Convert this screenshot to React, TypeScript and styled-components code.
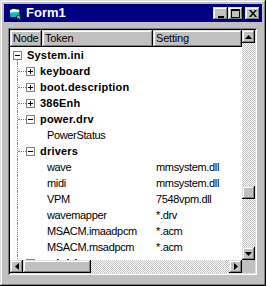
import React from 'react';
import styled, { createGlobalStyle, css } from 'styled-components';

const GlobalStyle = createGlobalStyle`
  html, body {
    margin: 0;
    padding: 0;
    background: #c0c0c0;
  }
  * {
    box-sizing: border-box;
  }
`;

const raised = css`
  box-shadow: inset -1px -1px #000, inset 1px 1px #dfdfdf,
    inset -2px -2px #808080, inset 2px 2px #fff;
`;

const Window = styled.div`
  width: 266px;
  height: 286px;
  padding: 4px;
  display: flex;
  flex-direction: column;
  background: #c0c0c0;
  ${raised}
  font-family: 'Liberation Sans', Arial, sans-serif;
`;

const TitleBar = styled.div`
  height: 18px;
  flex: none;
  background: #000080;
  display: flex;
  align-items: center;
  padding: 0 2px 0 4px;
`;

const TitleText = styled.span`
  flex: 1;
  margin-left: 4px;
  color: #fff;
  font-weight: bold;
  font-size: 13px;
  line-height: 18px;
`;

const CaptionButton = styled.div<{ $gap?: boolean }>`
  width: 15px;
  height: 13px;
  margin-left: ${p => (p.$gap ? '2px' : '0')};
  background: #c0c0c0;
  ${raised}
  display: flex;
  align-items: center;
  justify-content: center;
`;

const Client = styled.div`
  flex: 1;
  min-height: 0;
  padding: 6px 5px 7px 4px;
  display: flex;
`;

const TreeFrame = styled.div`
  flex: 1;
  padding: 2px;
  background: #fff;
  box-shadow: inset 1px 1px #808080, inset -1px -1px #fff,
    inset 2px 2px #000, inset -2px -2px #dfdfdf;
  display: grid;
  grid-template-columns: minmax(0, 1fr) 13px;
  grid-template-rows: minmax(0, 1fr) 13px;
  min-height: 0;
`;

const ListArea = styled.div`
  overflow: hidden;
  min-height: 0;
  display: flex;
  flex-direction: column;
`;

const Header = styled.div`
  display: grid;
  grid-template-columns: 32px 111px 89px;
  height: 17px;
  flex: none;
`;

const HeaderCell = styled.div`
  background: #c0c0c0;
  ${raised}
  font-size: 11px;
  letter-spacing: -0.2px;
  line-height: 16px;
  padding-left: 3px;
  color: #000;
  white-space: nowrap;
  overflow: hidden;
`;

const Row = styled.div`
  height: 16px;
  flex: none;
  display: grid;
  grid-template-columns: 146px 1fr;
  align-items: stretch;
`;

const NodePart = styled.div`
  display: flex;
  align-items: stretch;
`;

const Cell = styled.div<{ $down?: boolean; $up?: boolean; $tee?: boolean }>`
  width: 13px;
  flex: none;
  position: relative;
  ${p =>
    (p.$up || p.$down) &&
    css`
      &::before {
        content: '';
        position: absolute;
        left: 7px;
        top: ${p.$up ? '0' : '9px'};
        bottom: 0;
        border-left: 1px dotted #808080;
      }
    `}
  ${p =>
    p.$tee &&
    css`
      &::after {
        content: '';
        position: absolute;
        left: 8px;
        right: -3px;
        top: 8px;
        border-top: 1px dotted #808080;
      }
    `}
`;

const Knob = styled.div`
  position: absolute;
  left: 3px;
  top: 4px;
  width: 9px;
  height: 9px;
  border: 1px solid #808080;
  background: #fff;
  z-index: 1;
  &::before {
    content: '';
    position: absolute;
    left: 1px;
    top: 3px;
    width: 5px;
    height: 1px;
    background: #000;
  }
`;

const PlusKnob = styled(Knob)`
  &::after {
    content: '';
    position: absolute;
    left: 3px;
    top: 1px;
    width: 1px;
    height: 5px;
    background: #000;
  }
`;

const Label = styled.span<{ $bold?: boolean; $indent: number }>`
  margin-left: ${p => p.$indent}px;
  font-size: 11px;
  line-height: 16px;
  font-weight: ${p => (p.$bold ? 'bold' : 'normal')};
  letter-spacing: ${p => (p.$bold ? '0.2px' : '-0.35px')};
  color: #000;
  white-space: nowrap;
`;

const Value = styled.span`
  font-size: 11px;
  line-height: 16px;
  letter-spacing: -0.35px;
  color: #000;
  white-space: nowrap;
`;

const VScroll = styled.div`
  display: flex;
  flex-direction: column;
  min-height: 0;
`;

const HScroll = styled.div`
  display: flex;
`;

const Track = styled.div<{ $vertical?: boolean }>`
  flex: 1;
  min-height: 0;
  display: flex;
  flex-direction: ${p => (p.$vertical ? 'column' : 'row')};
  background: repeating-conic-gradient(#c0c0c0 0 25%, #fff 0 50%) 0 0 / 2px 2px;
`;

const ScrollButton = styled.div`
  width: 13px;
  height: 13px;
  flex: none;
  background: #c0c0c0;
  ${raised}
  display: flex;
  align-items: center;
  justify-content: center;
`;

const Thumb = styled.div<{ $offset: number; $size: number; $vertical?: boolean }>`
  flex: none;
  background: #c0c0c0;
  ${raised}
  ${p =>
    p.$vertical
      ? css`
          margin-top: ${p.$offset}px;
          height: ${p.$size}px;
        `
      : css`
          margin-left: ${p.$offset}px;
          width: ${p.$size}px;
        `}
`;

const Corner = styled.div`
  background: #c0c0c0;
`;

type Node = {
  level: number;
  text: string;
  value?: string;
  state?: 'open' | 'closed';
};

const nodes: Node[] = [
  { level: 0, text: 'System.ini', state: 'open' },
  { level: 1, text: 'keyboard', state: 'closed' },
  { level: 1, text: 'boot.description', state: 'closed' },
  { level: 1, text: '386Enh', state: 'closed' },
  { level: 1, text: 'power.drv', state: 'open' },
  { level: 2, text: 'PowerStatus' },
  { level: 1, text: 'drivers', state: 'open' },
  { level: 2, text: 'wave', value: 'mmsystem.dll' },
  { level: 2, text: 'midi', value: 'mmsystem.dll' },
  { level: 2, text: 'VPM', value: '7548vpm.dll' },
  { level: 2, text: 'wavemapper', value: '*.drv' },
  { level: 2, text: 'MSACM.imaadpcm', value: '*.acm' },
  { level: 2, text: 'MSACM.msadpcm', value: '*.acm' },
  { level: 1, text: 'mci.drivers', state: 'closed' },
];

function Expander(props: { state?: 'open' | 'closed' }) {
  if (!props.state) return null;
  return props.state === 'open' ? <Knob /> : <PlusKnob />;
}

function TreeRow({ node }: { node: Node }) {
  let gutter: React.ReactNode;
  let indent = 4;
  if (node.level === 0) {
    gutter = (
      <Cell $down>
        <Expander state={node.state} />
      </Cell>
    );
  } else if (node.level === 1) {
    gutter = (
      <>
        <Cell $up $tee />
        <Cell>
          <Expander state={node.state} />
        </Cell>
      </>
    );
  } else {
    gutter = (
      <>
        <Cell $up />
        <Cell />
      </>
    );
    indent = 11;
  }
  return (
    <Row>
      <NodePart>
        {gutter}
        <Label $bold={node.level < 2} $indent={indent}>
          {node.text}
        </Label>
      </NodePart>
      <Value>{node.value}</Value>
    </Row>
  );
}

const Arrow = ({ dir }: { dir: 'up' | 'down' | 'left' | 'right' }) => {
  const pts = {
    up: '3.5,0 7,4 0,4',
    down: '0,0 7,0 3.5,4',
    left: '4,0 4,7 0,3.5',
    right: '0,0 0,7 4,3.5',
  }[dir];
  const vertical = dir === 'up' || dir === 'down';
  return (
    <svg width={vertical ? 7 : 4} height={vertical ? 4 : 7} viewBox={vertical ? '0 0 7 4' : '0 0 4 7'}>
      <polygon points={pts} fill="#000" />
    </svg>
  );
};

function FormIcon() {
  return (
    <svg width="14" height="13" viewBox="0 0 14 13">
      <path d="M1 3 L5 1 L12 2 L12 10 L2 11 Z" fill="#00c0c0" stroke="#000" strokeWidth="1" />
      <path d="M2 3.5 L5 2 L11 3 L11 5 L2 5.5 Z" fill="#fff" />
      <path d="M9 8 L9 12.5 L10.5 11 L12 13 L13 12.5 L12 10.5 L13.5 10 Z" fill="#c0c0c0" stroke="#000" strokeWidth="0.6" />
    </svg>
  );
}

export default function App() {
  return (
    <>
      <GlobalStyle />
      <Window>
        <TitleBar>
          <FormIcon />
          <TitleText>Form1</TitleText>
          <CaptionButton>
            <svg width="6" height="9" viewBox="0 0 6 9">
              <rect x="0" y="7" width="6" height="2" fill="#000" />
            </svg>
          </CaptionButton>
          <CaptionButton>
            <svg width="9" height="9" viewBox="0 0 9 9">
              <rect x="0.5" y="0.5" width="8" height="8" fill="none" stroke="#000" />
              <rect x="0" y="1" width="9" height="1" fill="#000" />
            </svg>
          </CaptionButton>
          <CaptionButton $gap>
            <svg width="8" height="7" viewBox="0 0 8 7">
              <path d="M0 0 L2 0 L4 2.5 L6 0 L8 0 L5 3.5 L8 7 L6 7 L4 4.5 L2 7 L0 7 L3 3.5 Z" fill="#000" />
            </svg>
          </CaptionButton>
        </TitleBar>
        <Client>
          <TreeFrame>
            <ListArea>
              <Header>
                <HeaderCell>Node</HeaderCell>
                <HeaderCell>Token</HeaderCell>
                <HeaderCell>Setting</HeaderCell>
              </Header>
              {nodes.map((n, i) => (
                <TreeRow key={i} node={n} />
              ))}
            </ListArea>
            <VScroll>
              <ScrollButton>
                <Arrow dir="up" />
              </ScrollButton>
              <Track $vertical>
                <Thumb $vertical $offset={143} $size={13} />
              </Track>
              <ScrollButton>
                <Arrow dir="down" />
              </ScrollButton>
            </VScroll>
            <HScroll>
              <ScrollButton>
                <Arrow dir="left" />
              </ScrollButton>
              <Track>
                <Thumb $offset={0} $size={68} />
              </Track>
              <ScrollButton>
                <Arrow dir="right" />
              </ScrollButton>
            </HScroll>
            <Corner />
          </TreeFrame>
        </Client>
      </Window>
    </>
  );
}
